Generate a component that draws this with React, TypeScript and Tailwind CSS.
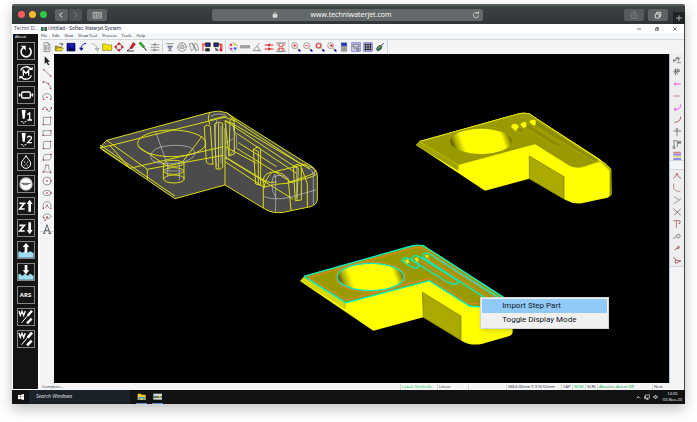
import type { ReactNode } from 'react';

type Tool = { name: string; art: ReactNode };

const RED = '#e02020';
const MARK = '#b83a3a';
const GRAY = '#6f6f6f';

function Magnifier({ children }: { children?: ReactNode }) {
  return (
    <>
      <path d="M21 21l5 5" stroke="#d8c830" strokeWidth="3" />
      <path d="M25 25l6 6" stroke="#10109a" strokeWidth="5" />
      <circle cx="14" cy="14" r="9" fill="#f6f0f0" stroke="#a08c8c" strokeWidth="2.5" />
      {children}
    </>
  );
}

const fileTools: Tool[] = [
  {
    name: 'New',
    art: <path d="M9 5h12l6 6v21H9zM21 5v6h6M13 12v16M17 12v16M22 14v14" stroke="#777" fill="#eee" />,
  },
  {
    name: 'Open',
    art: (
      <>
        <path d="M7 29V15h6l2 3h11v11z" fill="#b8a818" stroke="#6e6410" />
        <path d="M7 29l6-8h18l-6 8z" fill="#ffe920" stroke="#8a7d10" />
        <path d="M18 10c4-5 8-4 10 1M29 7v5h-5" stroke="#222" />
      </>
    ),
  },
  {
    name: 'Save',
    art: (
      <>
        <path d="M6 7h24v23H6z" fill="#0d0d96" stroke="#05055c" />
        <path d="M11 8h14v9H11z" fill="#1d1db4" stroke="none" />
        <path d="M12 22h12v8H12z" fill="#05053c" stroke="none" />
      </>
    ),
  },
  {
    name: 'Undo',
    art: (
      <>
        <path d="M13 26C10 16 17 8 28 7" stroke="#1414a0" strokeWidth="3" />
        <path d="M6 20l14 0-7 10z" fill="#1414a0" stroke="none" />
      </>
    ),
  },
  {
    name: 'Redo',
    art: (
      <>
        <path d="M7 8c10 0 17 6 17 16" stroke="#aaa" strokeWidth="2.5" />
        <path d="M18 22h12l-4 9z" fill="#ccc" stroke="#999" />
      </>
    ),
  },
  {
    name: 'Folder',
    art: (
      <>
        <path d="M5 28V9h9l3 3h15v16z" fill="#ffee00" stroke="#7f7600" strokeWidth="2" />
        <path d="M10 17l8 7 8-7" stroke="#c0b000" />
      </>
    ),
  },
  {
    name: 'Move',
    art: (
      <>
        <path d="M18 4l6 7H12zM18 32l6-7H12zM4 18l7-6v12zM32 18l-7-6v12z" fill={RED} stroke="#701010" strokeWidth="1" />
        <path d="M18 12v12M12 18h12" stroke="#ddd" />
      </>
    ),
  },
  {
    name: 'Cut',
    art: (
      <>
        <path d="M15 21L24 5l7 4-10 14z" fill={RED} stroke="#701010" />
        <path d="M16 22L6 30h21" stroke="#222" strokeWidth="2.5" />
      </>
    ),
  },
  {
    name: 'Start point',
    art: (
      <>
        <path d="M6 6l6-2 11 13-5 3z" fill="#21c321" stroke="#0d6b0d" />
        <path d="M21 19l7 10" stroke="#222" strokeWidth="3" />
      </>
    ),
  },
  {
    name: 'Parameters',
    art: (
      <>
        <path d="M5 11h26M5 19h26M5 27h26" stroke="#999" strokeWidth="3" />
        <path d="M20 6l-7 5 7 4M14 23l8 4-8 4" fill="#999" stroke="#888" />
      </>
    ),
  },
];

const machineTools: Tool[] = [
  {
    name: 'Nozzle',
    art: (
      <>
        <path d="M7 8h22M10 16h16M12 29h12" stroke="#777" strokeWidth="2.5" />
        <path d="M12 16l6 11 6-11z" fill="#8fa8ef" stroke="#555" />
      </>
    ),
  },
  {
    name: 'Disc',
    art: (
      <>
        <circle cx="18" cy="18" r="13" stroke="#777" strokeWidth="2" />
        <path d="M10 10l16 16M26 10L10 26M18 5v8M5 18h8M23 18h8" stroke="#777" />
        <circle cx="18" cy="18" r="4" fill="#fff" stroke="#777" />
      </>
    ),
  },
  {
    name: 'Nesting',
    art: <path d="M4 9l9-3 5 16-8 7zM17 10l9-3 6 19-9 4zM13 6l13 22" stroke="#777" strokeWidth="2" />,
  },
  {
    name: 'Load from machine',
    art: (
      <>
        <path d="M16 5h15v12H16z" fill="#111" stroke="#111" strokeWidth="1" />
        <path d="M19 8h9v6h-9z" fill="#3535c8" stroke="none" />
        <path d="M14 7v5H9v18M5 9h6" stroke={RED} strokeWidth="3" />
        <path d="M17 23h11v7H17z" fill="#333" stroke="#111" />
      </>
    ),
  },
  {
    name: 'Send to machine',
    art: (
      <>
        <path d="M5 5h15v12H5z" fill="#111" stroke="#111" strokeWidth="1" />
        <path d="M8 8h9v6H8z" fill="#3535c8" stroke="none" />
        <path d="M21 10h9v12M26 8v14" stroke={RED} strokeWidth="3" />
        <path d="M23 22h8v9h-8z" fill={RED} stroke="none" />
        <path d="M9 20l10 8h-8" fill="#555" stroke="#333" />
      </>
    ),
  },
];

const measureTools: Tool[] = [
  {
    name: 'Palette',
    art: (
      <>
        <circle cx="18" cy="18" r="13" fill="#eee" stroke="#aaa" strokeWidth="2" />
        <circle cx="12" cy="12" r="3.5" fill="#e33" stroke="none" />
        <circle cx="23" cy="11" r="3.5" fill="#f0d020" stroke="none" />
        <circle cx="13" cy="24" r="3.5" fill="#b040c0" stroke="none" />
        <circle cx="24" cy="22" r="3.5" fill="#2a50e0" stroke="none" />
      </>
    ),
  },
  {
    name: 'Ruler',
    art: <path d="M4 14h28v7H4zM8 14v4M13 14v5M18 14v4M23 14v5M28 14v4" fill="#bbb" stroke="#666" strokeWidth="1.5" />,
  },
  {
    name: 'Angle',
    art: <path d="M26 6L6 29h25M18 16c5 3 7 7 6 13" stroke="#666" strokeWidth="2" />,
  },
  {
    name: 'Swap',
    art: (
      <>
        <path d="M5 12h26M5 24h26" stroke={RED} strokeWidth="3" />
        <path d="M21 7l-8 5 8 5zM16 19l8 5-8 5z" fill={RED} stroke="none" />
      </>
    ),
  },
  {
    name: 'Join',
    art: (
      <>
        <path d="M4 6h28M4 31h28" stroke="#777" strokeWidth="3" />
        <path d="M6 13l7-3v7h10v-7l7 3M6 25l7 3v-8M30 25l-7 3v-8M9 22h18" stroke={RED} strokeWidth="2" />
      </>
    ),
  },
];

const viewTools: Tool[] = [
  {
    name: 'Zoom in',
    art: (
      <Magnifier>
        <path d="M14 9v10M9 14h10" stroke={RED} strokeWidth="2" />
      </Magnifier>
    ),
  },
  {
    name: 'Zoom out',
    art: (
      <Magnifier>
        <path d="M9 14h10" stroke={RED} strokeWidth="2" />
      </Magnifier>
    ),
  },
  {
    name: 'Zoom window',
    art: (
      <Magnifier>
        <path d="M8 9h12v10H8z" stroke={RED} strokeWidth="2.5" />
      </Magnifier>
    ),
  },
  {
    name: 'Zoom previous',
    art: (
      <Magnifier>
        <path d="M19 9v10l-9-5z" fill={RED} stroke="none" />
      </Magnifier>
    ),
  },
  {
    name: 'Calculator',
    art: (
      <>
        <path d="M10 5h16v26H10z" fill="#888" stroke="#888" />
        <path d="M10 6h16v8H10z" fill="#1a35c8" stroke="none" />
        <path d="M11 19h14M11 24h14M11 29h14" stroke="#ddd" strokeDasharray="3 2" />
      </>
    ),
  },
  {
    name: 'Preview',
    art: (
      <>
        <path d="M5 5h26v26H5z" fill="#d9d9f7" stroke="#7575d8" strokeWidth="2.5" />
        <path d="M9 10h18v8H9zM10 25c3-5 6-2 7 0M20 22h7v6h-7z" stroke="#444" strokeWidth="2" />
      </>
    ),
  },
  {
    name: 'Grid',
    art: (
      <>
        <path d="M5 5h26v26H5z" fill="#cfcff5" stroke="#7575d8" strokeWidth="2.5" />
        <path d="M7 11h22M7 18h22M7 25h22M11 7v22M18 7v22M25 7v22" stroke="#111" strokeWidth="2.5" />
      </>
    ),
  },
  {
    name: 'Render',
    art: (
      <>
        <path d="M8 22l8-9 8 2-2 8-7 6-6-1z" fill="#3f6f58" stroke="#333" />
        <path d="M22 13l7-7" stroke="#333" strokeWidth="3" />
        <path d="M12 22l8-6" stroke="#4cc04c" strokeWidth="3" />
      </>
    ),
  },
];

const drawTools: Tool[] = [
  { name: 'Select', art: <path d="M11 4v23l5-5 5 9 4-2-5-9h7z" fill="#222" stroke="none" /> },
  {
    name: 'Line',
    art: (
      <>
        <path d="M9 9l19 17" />
        <path d="M6 6h4v4H6zM27 25h4v4h-4z" fill={MARK} stroke="none" />
      </>
    ),
  },
  {
    name: 'Arc',
    art: (
      <>
        <path d="M7 9c12 0 21 8 22 20" />
        <path d="M5 7h4v4H5zM20 12h4v4h-4zM27 27h4v4h-4z" fill={MARK} stroke="none" />
      </>
    ),
  },
  {
    name: 'Centre arc',
    art: (
      <>
        <path d="M7 24C2 14 10 8 18 8c9 0 16 7 11 16" />
        <path d="M6 23h4v4H6zM16 17h4v4h-4zM27 23h4v4h-4z" fill={MARK} stroke="none" />
      </>
    ),
  },
  {
    name: 'Spline',
    art: (
      <>
        <path d="M5 19c5-14 10-6 13 0s8 12 13-4" />
        <path d="M4 17h4v4H4zM16 17h4v4h-4zM29 12h4v4h-4z" fill={MARK} stroke="none" />
      </>
    ),
  },
  {
    name: 'Square',
    art: (
      <>
        <path d="M7 7h22v22H7z" />
        <path d="M5 27h4v4H5zM27 5h4v4h-4z" fill={MARK} stroke="none" />
      </>
    ),
  },
  {
    name: 'Rectangle',
    art: (
      <>
        <path d="M6 11h24v14H6z" />
        <path d="M4 23h4v4H4zM28 9h4v4h-4z" fill={MARK} stroke="none" />
      </>
    ),
  },
  {
    name: 'Rounded square',
    art: (
      <>
        <rect x="7" y="7" width="22" height="22" rx="5" />
        <path d="M5 27h4v4H5zM27 5h4v4h-4z" fill={MARK} stroke="none" />
      </>
    ),
  },
  {
    name: 'Chamfered rectangle',
    art: (
      <>
        <path d="M12 10h18v10l-5 7H7V16z" />
        <path d="M5 25h4v4H5zM28 8h4v4h-4z" fill={MARK} stroke="none" />
      </>
    ),
  },
  {
    name: 'Polygon',
    art: (
      <>
        <path d="M14 6h9l1 13 7 8H7l5-8z" />
        <path d="M5 25h4v4H5zM27 27h4v4h-4zM14 5h3v3h-3z" fill={MARK} stroke="none" />
      </>
    ),
  },
  {
    name: 'Circle',
    art: (
      <>
        <circle cx="18" cy="18" r="12" />
        <path d="M16 16h4v4h-4zM28 16h4v4h-4z" fill={MARK} stroke="none" />
      </>
    ),
  },
  {
    name: 'Ellipse',
    art: (
      <>
        <ellipse cx="18" cy="18" rx="12" ry="8" />
        <path d="M16 16h4v4h-4zM28 16h4v4h-4z" fill={MARK} stroke="none" />
      </>
    ),
  },
  {
    name: 'Open shape',
    art: (
      <>
        <path d="M7 27C4 14 10 8 18 8s14 6 11 18M12 27l6-8 6 8" />
        <path d="M5 26h4v4H5zM16 17h4v4h-4zM27 26h4v4h-4z" fill={MARK} stroke="none" />
      </>
    ),
  },
  {
    name: 'Elliptic arc',
    art: (
      <>
        <path d="M9 24C2 16 10 9 19 9s15 8 8 12-12 1-9-3M13 29l5-11" />
        <path d="M10 26h4v4h-4zM17 16h4v4h-4zM6 18h4v4H6z" fill={MARK} stroke="none" />
      </>
    ),
  },
  {
    name: 'Text',
    art: <path d="M6 31h7M22 31h9M9 31l9-26 9 26M12 22h13" stroke="#444" strokeWidth="2.5" />,
  },
];

const editTools: Tool[] = [
  { name: 'Trim', art: <path d="M6 20h9v-8h8v10M9 15v10M19 8v8M23 14l5-3M18 26h12" stroke="#555" strokeWidth="2" /> },
  { name: 'Extend', art: <path d="M7 16h20M14 7v22M21 8v12M8 22l6-5 8 8M10 12h17" stroke="#555" strokeWidth="2" /> },
  { name: 'Lead in', art: <path d="M10 18h19M14 14l-5 4 5 4" stroke="#f04cf0" strokeWidth="3" /> },
  { name: 'Cut path', art: <path d="M8 18h20" stroke="#b06060" strokeWidth="2" /> },
  { name: 'Lead arc', art: <path d="M29 7c0 11-6 16-19 15M14 18l-5 4 5 4" stroke="#f04cf0" strokeWidth="3" /> },
  { name: 'Arc path', art: <path d="M29 8c0 11-7 16-18 17" stroke="#a04040" strokeWidth="2.5" /> },
  { name: 'Tee', art: <path d="M7 15h24M18 7v24M14 11l4-4 4 4" stroke="#555" strokeWidth="2" /> },
  { name: 'Nodes', art: <path d="M7 8h12v6h9M9 8v18M19 13v14M6 26h6v5H6zM23 10h6v6h-6z" stroke="#555" strokeWidth="2" /> },
  {
    name: 'Layers',
    art: (
      <>
        <path d="M7 8h23" stroke="#d08080" strokeWidth="5" />
        <path d="M7 14h23M7 27h23" stroke="#8c8cf0" strokeWidth="6" />
        <path d="M7 20h23" stroke="#dcd870" strokeWidth="5" />
      </>
    ),
  },
];

const cornerTools: Tool[] = [
  { name: 'Peak', art: <path d="M7 25l6-5 5-11 4 11 8 5" stroke="#a85050" strokeWidth="2.5" /> },
  { name: 'Fillet', art: <path d="M8 5v11c0 8 6 12 20 12" stroke="#9a5a5a" strokeWidth="2" /> },
  { name: 'Corner', art: <path d="M8 8l18 10L8 29M26 18l5-5" stroke="#777" strokeWidth="2" /> },
  { name: 'Cross', art: <path d="M7 8l22 20M29 9L9 28" stroke="#806060" strokeWidth="2.5" /> },
  { name: 'Step', art: <path d="M7 8h20v8h-5M16 9v20" stroke="#a06060" strokeWidth="2.5" /> },
  { name: 'Loop', art: <path d="M7 27l9-9c3-8 13-6 11 1s-10 6-10-1" stroke="#666" strokeWidth="2.5" /> },
  { name: 'Point', art: <path d="M11 24l6-4M19 15c4-4 9-1 5 3s-8 2-5-3" stroke="#a04848" strokeWidth="3" /> },
  { name: 'Branch', art: <path d="M8 9l6 9 16 3-18 7M14 18l-2 9" stroke="#a05050" strokeWidth="2.5" /> },
];

// machine control buttons, drawn on a 54 unit grid
const machineControls: Tool[] = [
  {
    name: 'Reset',
    art: (
      <>
        <path d="M19 17a15 15 0 1 0 18 1" strokeWidth="5" />
        <path d="M11 11h15v14z" fill="#fff" stroke="none" />
      </>
    ),
  },
  {
    name: 'Motor',
    art: (
      <>
        <path d="M11 20a17 17 0 0 1 31-3M43 34a17 17 0 0 1-31 3" strokeWidth="4" />
        <path d="M36 18h11V8zM18 36H7v10z" fill="#fff" stroke="none" />
        <path d="M19 35V19l8 9 8-9v16" strokeWidth="4" />
      </>
    ),
  },
  {
    name: 'Pump',
    art: (
      <>
        <rect x="14" y="18" width="26" height="18" rx="4" strokeWidth="4" />
        <path d="M5 27h9M40 27h9M8 22v10M46 22v10" strokeWidth="3" />
      </>
    ),
  },
  {
    name: 'Nozzle 1',
    art: (
      <>
        <path d="M14 6h12l-3 26h-6z" fill="#fff" stroke="none" />
        <path d="M12 41h5M23 41h5M18 45h4" strokeWidth="3" />
        <path d="M31 20l7-5v20M31 36h14" strokeWidth="4" />
      </>
    ),
  },
  {
    name: 'Nozzle 2',
    art: (
      <>
        <path d="M14 6h12l-3 26h-6z" fill="#fff" stroke="none" />
        <path d="M12 41h5M23 41h5M18 45h4" strokeWidth="3" />
        <path d="M31 20c3-7 15-5 12 3L32 35h13" strokeWidth="4" />
      </>
    ),
  },
  {
    name: 'Abrasive',
    art: (
      <>
        <path d="M27 8c4 9 14 15 14 25a14 13 0 0 1-28 0C13 23 23 17 27 8z" strokeWidth="3" />
        <path d="M21 27h3M30 27h3M25 33h4M20 38h3M31 38h3" strokeWidth="3" />
      </>
    ),
  },
  {
    name: 'Head',
    art: (
      <>
        <circle cx="27" cy="27" r="18" fill="#fff" stroke="#ccc" strokeWidth="4" />
        <path d="M13 25h28M19 25v4h14v-4" stroke="#444" strokeWidth="2.5" />
      </>
    ),
  },
  {
    name: 'Z up',
    art: (
      <>
        <path d="M7 19h15L8 36h15" strokeWidth="5" />
        <path d="M38 8l9 13h-5v23h-8V21h-5z" fill="#fff" stroke="none" />
      </>
    ),
  },
  {
    name: 'Z down',
    art: (
      <>
        <path d="M7 19h15L8 36h15" strokeWidth="5" />
        <path d="M38 46l9-13h-5V10h-8v23h-5z" fill="#fff" stroke="none" />
      </>
    ),
  },
  {
    name: 'Water up',
    art: (
      <>
        <path d="M4 33q4-5 8 0t8 0 8 0 8 0 8 0 6 0v17H4z" fill="#9edcf2" stroke="none" />
        <path d="M27 6l10 12h-6v18h-8V18h-6z" fill="#fff" stroke="none" />
      </>
    ),
  },
  {
    name: 'Water down',
    art: (
      <>
        <path d="M4 35q4-5 8 0t8 0 8 0 8 0 8 0 6 0v15H4z" fill="#9edcf2" stroke="none" />
        <path d="M27 34l10-12h-6V6h-8v16h-6z" fill="#fff" stroke="none" />
      </>
    ),
  },
  { name: 'ARS', art: null },
  {
    name: 'Water probe',
    art: (
      <>
        <path d="M6 9l4 13 5-12 5 12 5-13" strokeWidth="4" />
        <path d="M45 8L32 23M44 32L30 46" strokeWidth="7" />
        <path d="M33 22L14 44" strokeWidth="3" />
      </>
    ),
  },
  {
    name: 'Water jet',
    art: (
      <>
        <path d="M6 9l4 13 5-12 5 12 5-13" strokeWidth="4" />
        <path d="M45 8L32 23M44 32L30 46" strokeWidth="8" />
        <path d="M34 20L14 44" strokeWidth="3" />
      </>
    ),
  },
];

const statusCells = [
  { text: 'Lokale Kontrolle', style: 'w-[37px] text-green-500' },
  { text: 'Linear', style: 'w-[31px]' },
  { text: '', style: 'w-[38px]' },
  { text: 'X864.06mm Y-318.52mm', style: 'w-[55px]' },
  { text: 'CAP', style: 'w-[11px]' },
  { text: 'NUM', style: 'w-[13px] text-green-500' },
  { text: 'SCRL', style: 'w-3' },
  { text: 'Abrasive Alarm Off', style: 'w-[55px] text-green-600' },
  { text: 'New', style: 'w-8' },
];

function ToolButton({ tool }: { tool: Tool }) {
  return (
    <button type="button" aria-label={tool.name} className="block size-3 shrink-0">
      <svg viewBox="0 0 36 36" className="size-3" fill="none" stroke={GRAY} strokeWidth="2">
        {tool.art}
      </svg>
    </button>
  );
}

function ToolGroup({ tools }: { tools: Tool[] }) {
  return (
    <div className="flex items-center border-r border-gray-300 pr-px mr-px">
      {tools.map((tool) => (
        <ToolButton key={tool.name} tool={tool} />
      ))}
    </div>
  );
}

function BrowserBar() {
  return (
    <header className="relative flex h-5 shrink-0 items-center border-t-2 border-[#555b5b] bg-linear-to-b from-[#3d4345] to-[#303638] pl-1.5 pb-px">
      <div className="flex gap-1 pr-2">
        <span className="size-[7px] rounded-full bg-[#fc5b57]" />
        <span className="size-[7px] rounded-full bg-[#f8b62e]" />
        <span className="size-[7px] rounded-full bg-[#2fc840]" />
      </div>
      <div className="flex gap-px">
        <button type="button" aria-label="Back" className="h-3 w-[13px] rounded-xs bg-[#5d6263]">
          <svg viewBox="0 0 39 36" fill="none" stroke="#eee" strokeWidth="3">
            <path d="M22 10l-8 8 8 8" />
          </svg>
        </button>
        <button type="button" aria-label="Forward" className="h-3 w-[13px] rounded-xs bg-[#4e5354]">
          <svg viewBox="0 0 39 36" fill="none" stroke="#757a7b" strokeWidth="3">
            <path d="M16 10l8 8-8 8" />
          </svg>
        </button>
      </div>
      <button type="button" aria-label="Sidebar" className="ml-[5px] h-3 w-5 rounded-xs bg-[#5d6263]">
        <svg viewBox="0 0 60 36" fill="none" stroke="#ddd" strokeWidth="2">
          <path d="M18 10h25v17H18zM28 10v17M21 14h4M21 18h4M21 22h4" />
          <path d="M29 11h13v15H29z" fill="#8a8f90" stroke="none" />
        </svg>
      </button>
      <div className="ml-[105px] flex h-3 flex-1 items-center rounded-xs bg-[#636869]">
        <svg viewBox="0 0 18 24" className="ml-[60px] h-2 w-1.5" fill="none" stroke="#ddd" strokeWidth="2">
          <path d="M3 10h12v9H3z" fill="#ddd" />
          <path d="M6 10V7a3 3 0 0 1 6 0v3" />
        </svg>
        <input
          type="text"
          aria-label="Address"
          defaultValue="www.techniwaterjet.com"
          className="h-3 w-[146px] min-w-0 bg-transparent text-center text-[7px] text-white outline-none"
        />
        <button type="button" aria-label="Reload" className="ml-auto mr-0.5 size-2.5">
          <svg viewBox="0 0 30 30" fill="none" stroke="#ddd" strokeWidth="2.5">
            <path d="M21 10a8 8 0 1 0 2 6" />
            <path d="M16 10h7V4" />
          </svg>
        </button>
      </div>
      <button type="button" aria-label="Share" className="ml-[141px] h-3 w-5 rounded-xs bg-[#565b5c]">
        <svg viewBox="0 0 60 36" fill="none" stroke="#7f8485" strokeWidth="2.5">
          <path d="M26 15h-4v13h16V15h-4M30 22V7M26 11l4-4 4 4" />
        </svg>
      </button>
      <button type="button" aria-label="Tabs" className="ml-1 mr-[17px] h-3 w-5 rounded-xs bg-[#5d6263]">
        <svg viewBox="0 0 60 36" fill="none" stroke="#eee" strokeWidth="2.5">
          <path d="M22 15h12v12H22zM26 15v-5h12v12h-4" />
        </svg>
      </button>
      <button type="button" aria-label="New tab" className="absolute right-0 bottom-0 size-3 bg-[#1f2324]">
        <svg viewBox="0 0 36 36" fill="none" stroke="#a5a9aa" strokeWidth="3">
          <path d="M18 10v17M9 18h18" />
        </svg>
      </button>
    </header>
  );
}

function MachinePanel() {
  return (
    <aside className="flex w-[27px] shrink-0 flex-col">
      <h2 className="h-[10px] whitespace-nowrap pl-0.5 text-[5px] leading-[9px] text-gray-700">Techni D...</h2>
      <div className="ml-px mr-px mb-px flex flex-1 flex-col bg-[#141414]">
        <p className="h-2 pl-0.5 text-[4px] leading-[6px] text-white">About</p>
        <div className="flex h-[306px] flex-col items-center justify-between">
          {machineControls.map((control) => (
            <button
              key={control.name}
              type="button"
              aria-label={control.name}
              className="size-[18px] border border-[#858585] bg-[#161616] text-center text-[6px] leading-4 font-bold text-white"
            >
              {control.art ? (
                <svg viewBox="3 3 48 48" className="size-4" fill="none" stroke="#fff">
                  {control.art}
                </svg>
              ) : (
                control.name
              )}
            </button>
          ))}
        </div>
      </div>
    </aside>
  );
}

function WireframePart() {
  return (
    <g transform="translate(110 100) scale(.3333)" fill="none" stroke="#dddd12" strokeWidth="3">
      <path
        d="M-30 143L-10 121 300 37Q325 29 350 38L375 55 590 190Q622 205 622 228V300Q620 314 602 320L520 337Q490 341 468 329L345 255 195 296z"
        fill="#4b4b4b"
      />
      <path d="M-30 143L0 137 350 50M-10 121L112 208 340 166M-25 148L60 205 340 140M-30 135L195 288M112 208V238M345 255V85M0 137L60 205" />
      <path d="M300 37Q290 55 300 74M350 38L380 62M360 52L570 190 612 205M345 62L560 204M380 100L560 220M385 128L500 200M345 170L460 240M345 185L462 262M345 140L440 190M300 60L340 50 372 62V95" />
      <path d="M380 145L550 250M345 172L550 298M375 75L600 208" />
      <ellipse cx="185" cy="130" rx="102" ry="40" />
      <path d="M85 140L162 192M277 108L216 188M160 190V237M222 190V237" />
      <ellipse cx="191" cy="190" rx="30" ry="9" />
      <ellipse cx="191" cy="213" rx="30" ry="10" />
      <ellipse cx="192" cy="237" rx="31" ry="12" />
      <path d="M283 80q9-9 18-1M283 80l6 107q8 10 20 4M301 79L309 195M314 72q10-10 24-2v132q-8 10-20 4zM326 70v137M345 62l28 10v90l-16 6zM360 60l-3 108M430 148l14-8 8 8v108l-15-4zM430 148l15 6v100M550 198l14-5 10 7v100l-18 2zM550 198l15 7-4 96" />
      <path d="M460 240Q462 218 490 216L590 192M460 240V325M490 216Q520 215 535 240L543 332M460 262Q500 250 530 250L600 225Q615 220 620 212M485 218Q465 238 462 265M530 250L600 232Q620 226 622 220M575 204L592 252V322M462 240Q475 250 500 246" />
      <g stroke="#c4c4c4" strokeWidth="2">
        <path d="M138 98l40 112M173 232V192M208 240v-50M165 213h52" />
        <path d="M122 172Q122 138 188 136T255 160Q250 186 188 190T122 172" />
        <path d="M302 50q20-14 46-4M348 70v110M333 78v112M320 60q-10 40 0 140M345 130l25-14M366 70l14 40v30l-24 30" />
        <path d="M462 290Q495 302 540 292L618 270M497 225V335M490 232q22-14 46 4M495 222q-20 30 2 70M592 200q18 10 18 30v85M600 196q16 10 14 30M560 205v90" />
      </g>
    </g>
  );
}

function SolidPart() {
  return (
    <g transform="translate(400 100) scale(.3333)">
      <path
        d="M48 135L60 123 350 42Q368 36 388 40L405 52 600 178 632 205 635 282Q632 290 622 293L545 310Q520 313 497 300L388 236 255 272z"
        fill="#ff0"
      />
      <path d="M48 135L60 123 350 42Q368 36 388 40L405 52 600 184 545 202Q525 205 510 198L405 133 175 195V212z" fill="#999900" />
      <path d="M60 126L175 195V211L50 137z" fill="#a3a300" />
      <path d="M60 124L350 43Q368 37 388 41L405 53 600 180" fill="none" stroke="#e6e600" strokeWidth="3" />
      <path d="M60 126L175 195M545 202L605 184 630 206" fill="none" stroke="#c8c800" strokeWidth="2" />
      <path d="M388 168L492 230V297L388 236z" fill="#aaaa00" stroke="#777700" strokeWidth="2" />
      <path d="M600 183l14 4 18 19-4 6z" fill="#bcbc00" />
      <path d="M629 212l6-5v75l-6 9z" fill="#8f8f00" />
      <ellipse cx="243" cy="124" rx="92" ry="38" fill="url(#bowl)" />
      <g stroke="#b0b000" strokeWidth="2" fill="#8c8c00">
        <path d="M335 77q10-10 20 0l18 13q6 10-12 8l-14-5z" />
        <path d="M362 70q10-9 20 0l100 63q4 10-16 6L370 78z" />
        <path d="M390 60q10-6 18 1l186 118q-4 8-16 2L402 76z" />
      </g>
      <path d="M333 80q4-11 16-8l8 8-10 14zM361 74q6-11 17-7l2 12-9 5zM388 66q6-11 19-5v14l-8 1z" fill="#ff0" />
    </g>
  );
}

function SelectedPart() {
  return (
    <g transform="translate(290 230) scale(.3333)">
      <path
        d="M30 153L45 137 365 48Q385 43 402 48L640 200 668 225V305Q668 315 656 319L575 342Q540 348 515 332L400 262 250 302z"
        fill="#ff0"
      />
      <path d="M42 142L48 136 365 49Q385 44 402 50L660 215 600 225 560 230Q545 231 530 222L418 152 168 218V238L34 150z" fill="#999900" />
      <path d="M42 142L168 218V238L32 153z" fill="#d6d600" />
      <path d="M397 187L513 258V330L400 262z" fill="#aaaa00" stroke="#777700" strokeWidth="2" />
      <ellipse cx="242" cy="141" rx="99" ry="40" fill="url(#bowl)" />
      <g fill="none" stroke="#f08020" strokeWidth="3">
        <path d="M56 142L366 55Q385 50 399 55L640 210M56 142L168 210 418 145 540 221H565" />
        <path d="M412 84l190 122M430 82l190 122M374 96l95 61M390 92l105 65" />
        <ellipse cx="242" cy="141" rx="105" ry="45" />
      </g>
      <g fill="none" stroke="#00f0c8" strokeWidth="4">
        <path d="M42 139L365 48Q385 43 402 48L650 208M42 139L168 218 418 152 535 226Q545 231 575 230" />
        <ellipse cx="242" cy="141" rx="100" ry="41" />
        <path d="M336 92q6-12 20-6l30 16q4 12-12 12l-14-6z" />
        <path d="M366 84q6-12 22-4l116 72q4 11-16 10l-16-6-102-62z" />
        <path d="M397 74q8-8 22-2l210 133M397 76l10 12 185 120" />
      </g>
      <path d="M343 91l12-3 3 9-7 6zM373 85l11-3 3 11-8 3zM403 76l12-2 2 8-7 2z" fill="#dde800" />
    </g>
  );
}

function Canvas() {
  return (
    <main className="relative min-w-0 flex-1 bg-black">
      <svg viewBox="54 54 615 329" className="absolute inset-0 size-full">
        <defs>
          <linearGradient id="bowl" x1="0" y1="0.5" x2="1" y2="0.35">
            <stop offset="0" stopColor="#555500" />
            <stop offset="0.08" stopColor="#aaaa00" />
            <stop offset="0.2" stopColor="#ffff00" />
            <stop offset="0.84" stopColor="#ffff00" />
            <stop offset="0.94" stopColor="#999900" />
            <stop offset="1" stopColor="#555500" />
          </linearGradient>
        </defs>
        <WireframePart />
        <SolidPart />
        <SelectedPart />
      </svg>
      <div
        role="menu"
        className="absolute top-[74%] left-[69.3%] flex w-[129px] flex-col border border-gray-300 bg-[#f0f0f0] p-px font-['Roboto',sans-serif] text-[8px] leading-[14px] text-gray-900 shadow-md"
      >
        <button type="button" role="menuitem" className="bg-[#91c9f7] pl-5 text-left">
          Import Step Part
        </button>
        <button type="button" role="menuitem" className="pl-5 text-left">
          Toggle Display Mode
        </button>
      </div>
    </main>
  );
}

function CadWindow() {
  return (
    <section className="flex min-w-0 flex-1 flex-col pl-px">
      <div className="flex h-[9px] items-center text-gray-700">
        <svg viewBox="0 0 18 12" className="ml-px mr-px h-1 w-1.5">
          <path d="M0 0h8v12H0z" fill="#2d7d46" />
          <path d="M10 0h8v12h-8z" fill="#4a5a50" />
        </svg>
        <h1 className="font-['Roboto',sans-serif] text-[5px]">Untitled - Softec Waterjet System</h1>
        <div className="ml-auto mr-[7px] flex gap-3.5">
          <button type="button" aria-label="Minimise" className="size-1">
            <svg viewBox="0 0 12 12" stroke="#333" strokeWidth="2">
              <path d="M0 6h12" />
            </svg>
          </button>
          <button type="button" aria-label="Restore" className="size-1">
            <svg viewBox="0 0 12 12" fill="none" stroke="#333" strokeWidth="2">
              <path d="M1 4h7v7H1zM4 4V1h7v7H8" />
            </svg>
          </button>
          <button type="button" aria-label="Close" className="size-1">
            <svg viewBox="0 0 12 12" stroke="#333" strokeWidth="2">
              <path d="M1 1l10 10M11 1L1 11" />
            </svg>
          </button>
        </div>
      </div>
      <nav className="flex h-[7px] items-center gap-[5px] border-b border-gray-300 bg-[#f5f6f7] pl-px text-[4px] font-medium text-gray-900">
        <button type="button">File</button>
        <button type="button">Edit</button>
        <button type="button">View</button>
        <button type="button">Draw Tool</button>
        <button type="button">Process</button>
        <button type="button">Tools</button>
        <button type="button">Help</button>
      </nav>
      <div className="flex h-3.5 shrink-0 items-stretch bg-[#f3f4f6] pl-px">
        <ToolGroup tools={fileTools} />
        <ToolGroup tools={machineTools} />
        <ToolGroup tools={measureTools} />
        <ToolGroup tools={viewTools} />
      </div>
      <div className="flex min-h-0 flex-1">
        <div className="w-3.5 shrink-0 bg-[#f3f4f6]">
          <div className="flex h-[178px] flex-col items-center justify-between border-b border-gray-300 pt-px">
            {drawTools.map((tool) => (
              <ToolButton key={tool.name} tool={tool} />
            ))}
          </div>
        </div>
        <Canvas />
        <div className="w-[15px] shrink-0 border-l border-[#b5c4d0] bg-[#f3f4f6]">
          <div className="flex h-[107px] flex-col items-center justify-between border-b border-gray-300 bg-[#eee]">
            {editTools.map((tool) => (
              <ToolButton key={tool.name} tool={tool} />
            ))}
          </div>
          <div className="mt-2 flex h-[98px] flex-col items-center justify-between border-y border-gray-300 bg-[#eee]">
            {cornerTools.map((tool) => (
              <ToolButton key={tool.name} tool={tool} />
            ))}
          </div>
        </div>
      </div>
      <div className="flex h-[7px] items-center bg-[#f5f5f5] pl-0.5 text-[4px] leading-[6px] text-gray-800">
        <span className="flex-1">Complete...</span>
        {statusCells.map((cell, i) => (
          <span key={i} className={`h-1.5 shrink-0 border-l border-gray-300 pl-px whitespace-nowrap ${cell.style}`}>
            {cell.text}
          </span>
        ))}
      </div>
    </section>
  );
}

function Taskbar() {
  return (
    <footer className="flex h-3.5 shrink-0 items-stretch bg-[#101214] text-white">
      <button type="button" aria-label="Start" className="flex w-[17px] items-center justify-center">
        <svg viewBox="0 0 18 18" className="size-1.5" fill="#fff">
          <path d="M0 3l8-1v6H0zM9 2l9-2v8H9zM0 9h8v7l-8-1zM9 9h9v9l-9-2z" />
        </svg>
      </button>
      <input
        type="text"
        aria-label="Search Windows"
        placeholder="Search Windows"
        className="w-[101px] bg-[#1b2128] pl-[7px] text-[5px] text-white italic outline-none placeholder:text-gray-200"
      />
      <button type="button" aria-label="Files" className="ml-1.5 w-[11px] border-b border-[#6a8fd0]">
        <svg viewBox="0 0 33 33" className="w-full">
          <path d="M5 8h9l3 3h12v16H5z" fill="#f6c928" />
          <path d="M8 18h18v9h-5v-5h-8v5H8z" fill="#3d9ae0" />
        </svg>
      </button>
      <button type="button" aria-label="Softec" className="ml-[5px] w-[11px] border-b border-[#6a8fd0]">
        <svg viewBox="0 0 33 33" className="w-full">
          <path d="M4 8h26v18H4z" fill="#d5dad5" />
          <path d="M4 15h26v6H4z" fill="#5a7a66" />
          <path d="M20 15h6v6h-6z" fill="#c8b040" />
        </svg>
      </button>
      <div className="ml-auto flex items-center gap-[3px] pr-[3px]">
        <svg viewBox="0 0 15 15" className="size-[5px]" fill="none" stroke="#eee" strokeWidth="2.5">
          <path d="M2 10l5-5 5 5" />
        </svg>
        <svg viewBox="0 0 18 18" className="size-1.5" fill="none" stroke="#eee" strokeWidth="2">
          <path d="M4 3h13v9H4zM7 16h7M10 12v4M1 6v8h6" />
        </svg>
        <svg viewBox="0 0 18 18" className="size-1.5" fill="none" stroke="#eee" strokeWidth="2">
          <path d="M2 7h3l4-4v12l-4-4H2zM12 6q3 3 0 6" />
        </svg>
        <div className="pl-px text-center text-[4px] leading-[6px]">
          <p>14:05</p>
          <p>03-Nov-23</p>
        </div>
      </div>
    </footer>
  );
}

export default function App() {
  return (
    <div className="flex h-screen flex-col bg-white px-3 pt-1 pb-[18px] font-['Open_Sans','Noto_Sans',sans-serif]">
      <div className="flex min-h-0 flex-1 flex-col overflow-hidden rounded-t-xs shadow-[0_5px_14px_rgba(0,0,0,0.25)]">
        <BrowserBar />
        <div className="flex min-h-0 flex-1 border-r border-[#444] bg-white">
          <MachinePanel />
          <CadWindow />
        </div>
        <Taskbar />
      </div>
    </div>
  );
}
